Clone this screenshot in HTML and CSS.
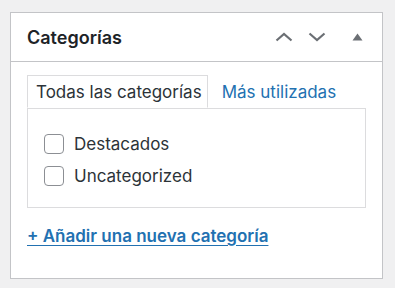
FILE: index.html
```html
<!DOCTYPE html>
<html lang="es">
<head>
    <meta charset="UTF-8">
    <meta name="viewport" content="width=device-width, initial-scale=1.0">
    <title>Categorías</title>
    <link rel="stylesheet" href="styles.css">
</head>
<body>
    <div class="postbox">
        <div class="postbox-header">
            <h2>Categorías</h2>
            <button class="handle-btn" aria-label="Subir">
                <svg width="18" height="10" viewBox="0 0 18 10"><path d="M1.5 8.5 L9 2 L16.5 8.5" fill="none" stroke="#6b6f74" stroke-width="2.2"/></svg>
            </button>
            <button class="handle-btn" aria-label="Bajar">
                <svg width="18" height="10" viewBox="0 0 18 10"><path d="M1.5 1.5 L9 8 L16.5 1.5" fill="none" stroke="#6b6f74" stroke-width="2.2"/></svg>
            </button>
            <button class="handle-btn toggle" aria-label="Cerrar">
                <svg width="11" height="8" viewBox="0 0 11 8"><path d="M0.5 7.5 L5.5 0.5 L10.5 7.5 Z" fill="#6b6f74"/></svg>
            </button>
        </div>
        <div class="inside">
            <ul class="tabs">
                <li class="tab active">Todas las categorías</li>
                <li class="tab"><a href="#">Más utilizadas</a></li>
            </ul>
            <div class="tabs-panel">
                <label class="cat-row"><input type="checkbox"> Destacados</label>
                <label class="cat-row"><input type="checkbox"> Uncategorized</label>
            </div>
            <a class="add-link" href="#">+ Añadir una nueva categoría</a>
        </div>
    </div>
</body>
</html>
```
FILE: styles.css
```css
* {
    margin: 0;
    padding: 0;
    box-sizing: border-box;
    font-family: Inter, "Noto Sans", sans-serif;
}

body {
    background-color: #f0f0f1;
    color: #1d2327;
    padding: 12px 0 0 10px;
}

/* Caja principal */
.postbox {
    width: 373px;
    background-color: #fff;
    border: 1px solid #c3c4c7;
}

.postbox-header {
    display: flex;
    align-items: center;
    height: 49px;
    border-bottom: 1px solid #c3c4c7;
    padding-left: 16px;
    padding-right: 8px;
}

.postbox-header h2 {
    flex: 1;
    font-size: 18px;
    font-weight: 600;
    color: #1d2327;
}

.handle-btn {
    width: 33px;
    height: 36px;
    border: none;
    background: none;
    display: flex;
    align-items: center;
    justify-content: center;
    cursor: pointer;
}

.handle-btn.toggle {
    margin-left: 8px;
}

.inside {
    padding: 13px 16px 30px 16px;
}

/* Pestañas */
.tabs {
    list-style: none;
    display: flex;
    font-size: 17px;
}

.tab {
    height: 33px;
    display: flex;
    align-items: center;
    padding: 0 14px;
}

.tab.active {
    padding: 0 5px 0 8px;
    border: 1px solid #dcdcde;
    border-bottom-color: #fff;
    background-color: #fff;
    margin-bottom: -1px;
    position: relative;
    color: #2c3338;
}

.tab a {
    color: #2271b1;
    text-decoration: none;
}

.tabs-panel {
    width: 339px;
    border: 1px solid #dcdcde;
    padding: 19px 16px 15px 16px;
}

.cat-row {
    display: flex;
    align-items: center;
    height: 32px;
    font-size: 17px;
    color: #2c3338;
}

.cat-row input[type="checkbox"] {
    appearance: none;
    width: 20px;
    height: 20px;
    border: 1px solid #8c8f94;
    border-radius: 4px;
    margin-right: 10px;
    background: #fff;
}

.add-link {
    display: block;
    margin-top: 16px;
    line-height: 24px;
    font-size: 17px;
    font-weight: 600;
    color: #2271b1;
    text-decoration: underline;
    text-underline-offset: 3px;
}
```
